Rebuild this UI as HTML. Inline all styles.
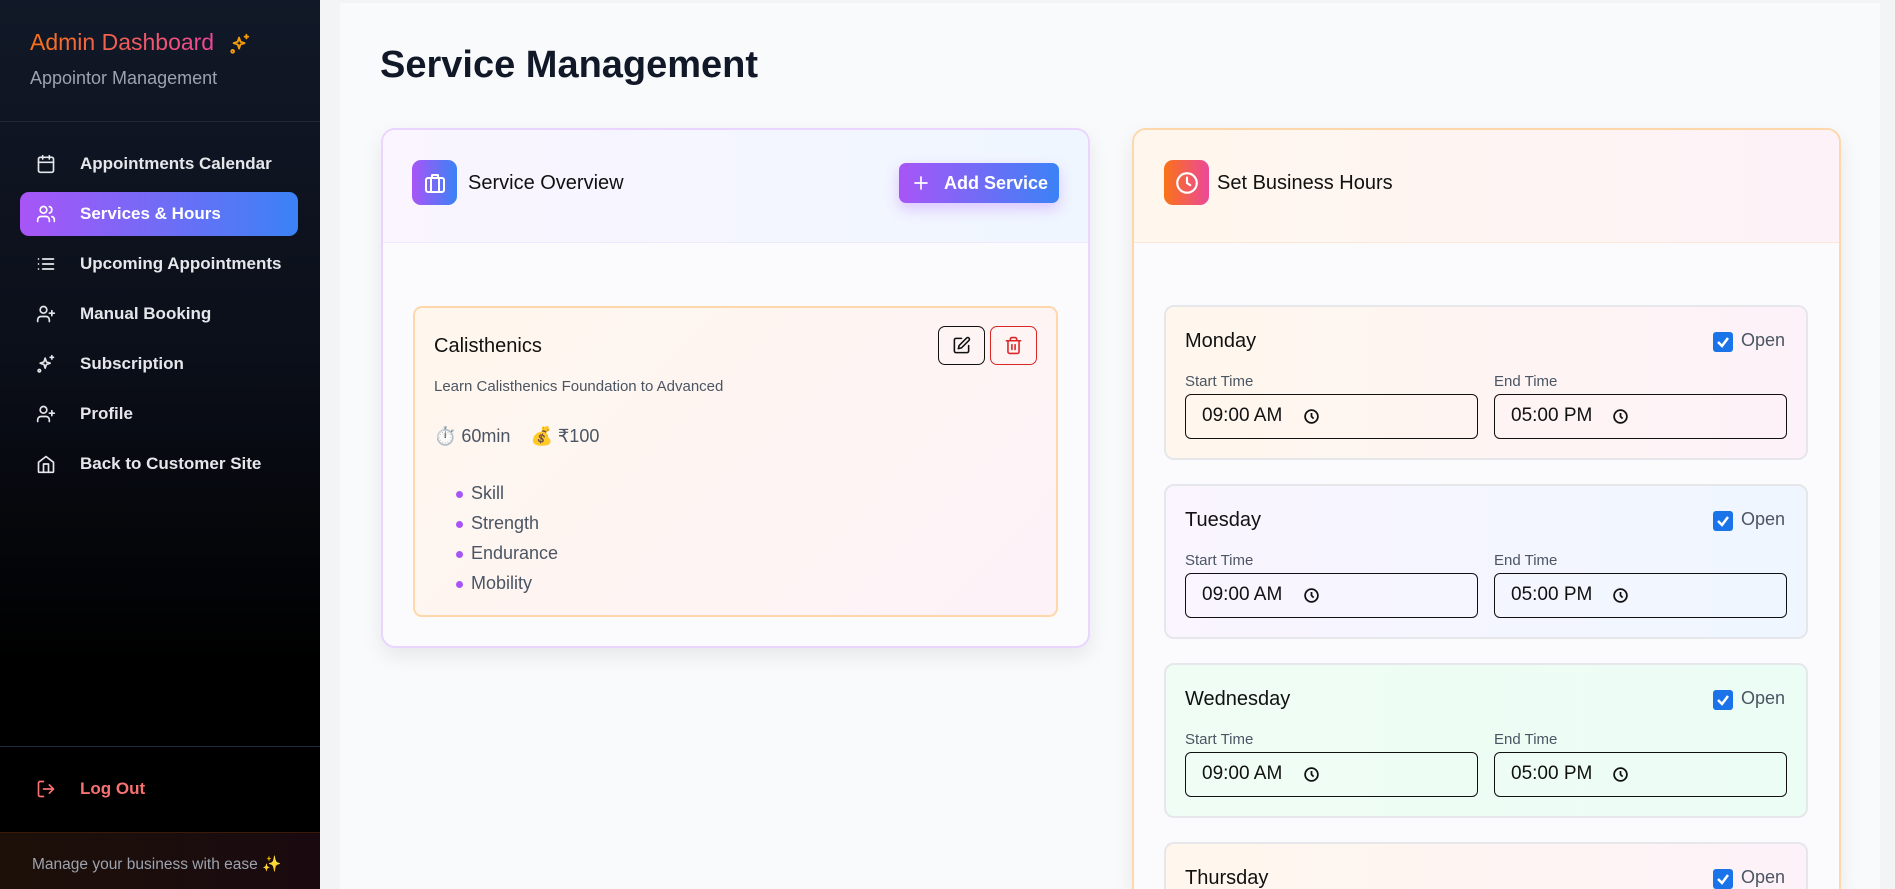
<!DOCTYPE html>
<html style="width:1895px;height:889px;overflow:hidden"><head><meta charset="utf-8">
<style>
*{box-sizing:border-box;margin:0;padding:0}
html,body{width:1895px;height:889px;overflow:hidden}
body{background:#f3f4f6;font-family:"Liberation Sans",Arial,sans-serif}
#wrap{position:relative;width:1895px;height:889px;overflow:hidden}
.abs{position:absolute}
#side{left:0;top:0;width:320px;height:889px;background:linear-gradient(180deg,#111827 0%,#0b0f19 40%,#000 75%,#000 100%)}
.nav{position:absolute;left:20px;width:278px;height:44px;color:#e5e7eb;font-size:17px;font-weight:bold;line-height:44px;padding-left:60px}
.nav svg{position:absolute;left:16px;top:12px}
.nav.act{background:linear-gradient(90deg,#a855f7,#3b82f6);border-radius:9px;color:#fff}
#panel{left:340px;top:3px;width:1540px;height:886px;background:#f9fafb}
.card{position:absolute;border-radius:14px;background:#fbfbfd;box-shadow:0 8px 20px rgba(0,0,0,.08)}
.ibox{position:absolute;width:45px;height:45px;border-radius:9px;display:flex;align-items:center;justify-content:center}
.day{position:absolute;left:1164px;width:644px;height:155px;border:2px solid #e5e7eb;border-radius:10px}
.day .n{position:absolute;left:19px;top:23px;font-size:20px;color:#111}
.day .cb{position:absolute;left:547px;top:25px;width:20px;height:20px;background:#1a73e8;border-radius:3px}
.day .op{position:absolute;left:575px;top:23px;font-size:18px;color:#4b5563}
.day .l{position:absolute;top:66px;font-size:15px;color:#4b5563}
.day .in{position:absolute;top:87px;width:293px;height:45px;border:1.5px solid #111;border-radius:6px;font-size:19px;color:#111;line-height:42px;padding-left:16px}
.day .in svg{position:absolute;left:117px;top:13px}
</style></head><body><div id="wrap">
<div id="side" class="abs">
  <div class="abs" style="left:30px;top:29px;font-size:23px;background:linear-gradient(90deg,#f97316,#ec4899);-webkit-background-clip:text;background-clip:text;color:transparent">Admin Dashboard</div>
  <svg class="abs" style="left:229px;top:33px" width="22" height="22" viewBox="0 0 24 24" fill="none" stroke="#f59e0b" stroke-width="2" stroke-linecap="round" stroke-linejoin="round"><path d="M11 5l1.5 4.5L17 11l-4.5 1.5L11 17l-1.5-4.5L5 11l4.5-1.5z"/><path d="M19 2v4M17 4h4"/><circle cx="4" cy="20" r="1.5"/></svg>
  <div class="abs" style="left:30px;top:68px;font-size:18px;color:#9ca3af">Appointor Management</div>
  <div class="abs" style="left:0;top:121px;width:320px;height:1px;background:#1f2937"></div>

  <div class="nav" style="top:142px"><svg width="20" height="20" viewBox="0 0 24 24" fill="none" stroke="#e5e7eb" stroke-width="2" stroke-linecap="round"><rect x="3" y="4" width="18" height="18" rx="2"/><path d="M16 2v4M8 2v4M3 10h18"/></svg>Appointments Calendar</div>
  <div class="nav act" style="top:192px"><svg width="20" height="20" viewBox="0 0 24 24" fill="none" stroke="#fff" stroke-width="2" stroke-linecap="round"><path d="M16 21v-2a4 4 0 0 0-4-4H6a4 4 0 0 0-4 4v2"/><circle cx="9" cy="7" r="4"/><path d="M22 21v-2a4 4 0 0 0-3-3.87M16 3.13a4 4 0 0 1 0 7.75"/></svg>Services &amp; Hours</div>
  <div class="nav" style="top:242px"><svg width="20" height="20" viewBox="0 0 24 24" fill="none" stroke="#e5e7eb" stroke-width="2" stroke-linecap="round"><path d="M8 6h13M8 12h13M8 18h13M3 6h.01M3 12h.01M3 18h.01"/></svg>Upcoming Appointments</div>
  <div class="nav" style="top:292px"><svg width="20" height="20" viewBox="0 0 24 24" fill="none" stroke="#e5e7eb" stroke-width="2" stroke-linecap="round"><path d="M16 21v-2a4 4 0 0 0-4-4H6a4 4 0 0 0-4 4v2"/><circle cx="9" cy="7" r="4"/><path d="M19 8v6M22 11h-6"/></svg>Manual Booking</div>
  <div class="nav" style="top:342px"><svg width="20" height="20" viewBox="0 0 24 24" fill="none" stroke="#e5e7eb" stroke-width="2" stroke-linecap="round" stroke-linejoin="round"><path d="M11 5l1.5 4.5L17 11l-4.5 1.5L11 17l-1.5-4.5L5 11l4.5-1.5z"/><path d="M19 2v4M17 4h4"/><circle cx="4" cy="20" r="1.5"/></svg>Subscription</div>
  <div class="nav" style="top:392px"><svg width="20" height="20" viewBox="0 0 24 24" fill="none" stroke="#e5e7eb" stroke-width="2" stroke-linecap="round"><path d="M16 21v-2a4 4 0 0 0-4-4H6a4 4 0 0 0-4 4v2"/><circle cx="9" cy="7" r="4"/><path d="M19 8v6M22 11h-6"/></svg>Profile</div>
  <div class="nav" style="top:442px"><svg width="20" height="20" viewBox="0 0 24 24" fill="none" stroke="#e5e7eb" stroke-width="2" stroke-linecap="round" stroke-linejoin="round"><path d="M3 10l9-7 9 7v11a1 1 0 0 1-1 1H4a1 1 0 0 1-1-1z"/><path d="M9 22V12h6v10"/></svg>Back to Customer Site</div>

  <div class="abs" style="left:0;top:746px;width:320px;height:1px;background:#1f2a3a"></div>
  <div class="nav" style="top:767px;color:#f87171"><svg width="20" height="20" viewBox="0 0 24 24" fill="none" stroke="#f87171" stroke-width="2" stroke-linecap="round" stroke-linejoin="round"><path d="M9 21H5a2 2 0 0 1-2-2V5a2 2 0 0 1 2-2h4"/><path d="M16 17l5-5-5-5M21 12H9"/></svg>Log Out</div>
  <div class="abs" style="left:0;top:832px;width:320px;height:57px;border-top:1px solid #3b1a0a;background:linear-gradient(90deg,#1c1008,#1a0a10)"></div>
  <div class="abs" style="left:32px;top:855px;font-size:15.5px;color:#9ca3af">Manage your business with ease ✨</div>
</div>

<div id="panel" class="abs"></div>
<div class="abs" style="left:380px;top:44px;font-size:38px;font-weight:bold;color:#111827">Service Management</div>

<!-- left card -->
<div class="card" style="left:381px;top:128px;width:709px;height:520px;border:2px solid #e9d5ff"></div>
<div class="abs" style="left:383px;top:130px;width:705px;height:113px;border-radius:12px 12px 0 0;background:linear-gradient(90deg,#faf5ff,#eff6ff);border-bottom:1px solid #ede9fe"></div>
<div class="ibox" style="left:412px;top:160px;background:linear-gradient(90deg,#a855f7,#3b82f6)"><svg width="24" height="24" viewBox="0 0 24 24" fill="none" stroke="#fff" stroke-width="2" stroke-linejoin="round"><rect x="3" y="7" width="18" height="14" rx="2"/><path d="M8 21V7M16 21V7M9 7V4h6v3"/></svg></div>
<div class="abs" style="left:468px;top:172px;font-size:20px;color:#111">Service Overview</div>
<div class="abs" style="left:899px;top:163px;width:160px;height:40px;border-radius:7px;background:linear-gradient(90deg,#a855f7,#3b82f6);box-shadow:0 6px 14px rgba(168,85,247,.3);color:#fff;font-size:18px;font-weight:bold;line-height:40px;padding-left:45px"><svg class="abs" style="left:14px;top:12px" width="16" height="16" viewBox="0 0 24 24" fill="none" stroke="#fff" stroke-width="2.5" stroke-linecap="round"><path d="M12 3v18M3 12h18"/></svg>Add Service</div>

<div class="abs" style="left:413px;top:306px;width:645px;height:311px;border:2px solid #fed7aa;border-radius:9px;background:linear-gradient(135deg,#fff7ed,#fdf2f8)"></div>
<div class="abs" style="left:434px;top:335px;font-size:20px;color:#111">Calisthenics</div>
<div class="abs" style="left:938px;top:326px;width:47px;height:39px;border:1.5px solid #111;border-radius:7px"><svg class="abs" style="left:13px;top:9px" width="19" height="19" viewBox="0 0 24 24" fill="none" stroke="#111" stroke-width="2" stroke-linecap="round" stroke-linejoin="round"><path d="M12 3H5a2 2 0 0 0-2 2v14a2 2 0 0 0 2 2h14a2 2 0 0 0 2-2v-7"/><path d="M18.4 2.6a2.1 2.1 0 0 1 3 3L12 15l-4 1 1-4z"/></svg></div>
<div class="abs" style="left:990px;top:326px;width:47px;height:39px;border:1.5px solid #dc2626;border-radius:7px"><svg class="abs" style="left:13px;top:9px" width="19" height="19" viewBox="0 0 24 24" fill="none" stroke="#dc2626" stroke-width="2" stroke-linecap="round"><path d="M3 6h18M19 6v14a2 2 0 0 1-2 2H7a2 2 0 0 1-2-2V6M8 6V4a2 2 0 0 1 2-2h4a2 2 0 0 1 2 2v2M10 11v6M14 11v6"/></svg></div>
<div class="abs" style="left:434px;top:378px;font-size:15px;color:#4b5563">Learn Calisthenics Foundation to Advanced</div>
<div class="abs" style="left:434px;top:426px;font-size:18px;color:#4b5563">⏱️ 60min &nbsp;&nbsp; 💰 ₹100</div>
<div class="abs" style="left:456px;top:478px;font-size:18px;color:#4b5563;line-height:30px">
<div><span style="display:inline-block;width:7px;height:7px;border-radius:50%;background:#a855f7;margin-right:8px;vertical-align:middle"></span>Skill</div>
<div><span style="display:inline-block;width:7px;height:7px;border-radius:50%;background:#a855f7;margin-right:8px;vertical-align:middle"></span>Strength</div>
<div><span style="display:inline-block;width:7px;height:7px;border-radius:50%;background:#a855f7;margin-right:8px;vertical-align:middle"></span>Endurance</div>
<div><span style="display:inline-block;width:7px;height:7px;border-radius:50%;background:#a855f7;margin-right:8px;vertical-align:middle"></span>Mobility</div>
</div>

<!-- right card -->
<div class="card" style="left:1132px;top:128px;width:709px;height:761px;border:2px solid #fed7aa;border-bottom:none;border-radius:14px 14px 0 0"></div>
<div class="abs" style="left:1134px;top:130px;width:705px;height:113px;border-radius:12px 12px 0 0;background:linear-gradient(90deg,#fff7ed,#fdf2f8);border-bottom:1px solid #fde8d8"></div>
<div class="ibox" style="left:1164px;top:160px;background:linear-gradient(90deg,#f97316,#ec4899)"><svg width="26" height="26" viewBox="0 0 24 24" fill="none" stroke="#fff" stroke-width="2" stroke-linecap="round"><circle cx="12" cy="12" r="9"/><path d="M12 7v5l3 2"/></svg></div>
<div class="abs" style="left:1217px;top:172px;font-size:20px;color:#111">Set Business Hours</div>

<div class="day" style="top:305px;background:linear-gradient(90deg,#fff7ed,#fdf2f8)"><div class="n">Monday</div><div class="cb"><svg width="20" height="20" viewBox="0 0 20 20"><path d="M5 10l4 4 6-8" fill="none" stroke="#fff" stroke-width="2.5"/></svg></div><div class="op">Open</div><div class="l" style="left:19px">Start Time</div><div class="l" style="left:328px">End Time</div><div class="in" style="left:19px">09:00 AM<svg width="17" height="17" viewBox="0 0 24 24" fill="none" stroke="#111" stroke-width="2.5"><circle cx="12" cy="12" r="9"/><path d="M12 7v5l3 3"/></svg></div><div class="in" style="left:328px">05:00 PM<svg width="17" height="17" viewBox="0 0 24 24" fill="none" stroke="#111" stroke-width="2.5"><circle cx="12" cy="12" r="9"/><path d="M12 7v5l3 3"/></svg></div></div>

<div class="day" style="top:484px;background:linear-gradient(90deg,#faf5ff,#eff6ff)"><div class="n">Tuesday</div><div class="cb"><svg width="20" height="20" viewBox="0 0 20 20"><path d="M5 10l4 4 6-8" fill="none" stroke="#fff" stroke-width="2.5"/></svg></div><div class="op">Open</div><div class="l" style="left:19px">Start Time</div><div class="l" style="left:328px">End Time</div><div class="in" style="left:19px">09:00 AM<svg width="17" height="17" viewBox="0 0 24 24" fill="none" stroke="#111" stroke-width="2.5"><circle cx="12" cy="12" r="9"/><path d="M12 7v5l3 3"/></svg></div><div class="in" style="left:328px">05:00 PM<svg width="17" height="17" viewBox="0 0 24 24" fill="none" stroke="#111" stroke-width="2.5"><circle cx="12" cy="12" r="9"/><path d="M12 7v5l3 3"/></svg></div></div>

<div class="day" style="top:663px;background:linear-gradient(90deg,#f0fdf4,#ecfdf5)"><div class="n">Wednesday</div><div class="cb"><svg width="20" height="20" viewBox="0 0 20 20"><path d="M5 10l4 4 6-8" fill="none" stroke="#fff" stroke-width="2.5"/></svg></div><div class="op">Open</div><div class="l" style="left:19px">Start Time</div><div class="l" style="left:328px">End Time</div><div class="in" style="left:19px">09:00 AM<svg width="17" height="17" viewBox="0 0 24 24" fill="none" stroke="#111" stroke-width="2.5"><circle cx="12" cy="12" r="9"/><path d="M12 7v5l3 3"/></svg></div><div class="in" style="left:328px">05:00 PM<svg width="17" height="17" viewBox="0 0 24 24" fill="none" stroke="#111" stroke-width="2.5"><circle cx="12" cy="12" r="9"/><path d="M12 7v5l3 3"/></svg></div></div>

<div class="day" style="top:842px;height:47px;border-bottom:none;border-radius:10px 10px 0 0;background:linear-gradient(90deg,#fff7ed,#fdf2f8)"><div class="n">Thursday</div><div class="cb"><svg width="20" height="20" viewBox="0 0 20 20"><path d="M5 10l4 4 6-8" fill="none" stroke="#fff" stroke-width="2.5"/></svg></div><div class="op">Open</div></div>
</div></body></html>
